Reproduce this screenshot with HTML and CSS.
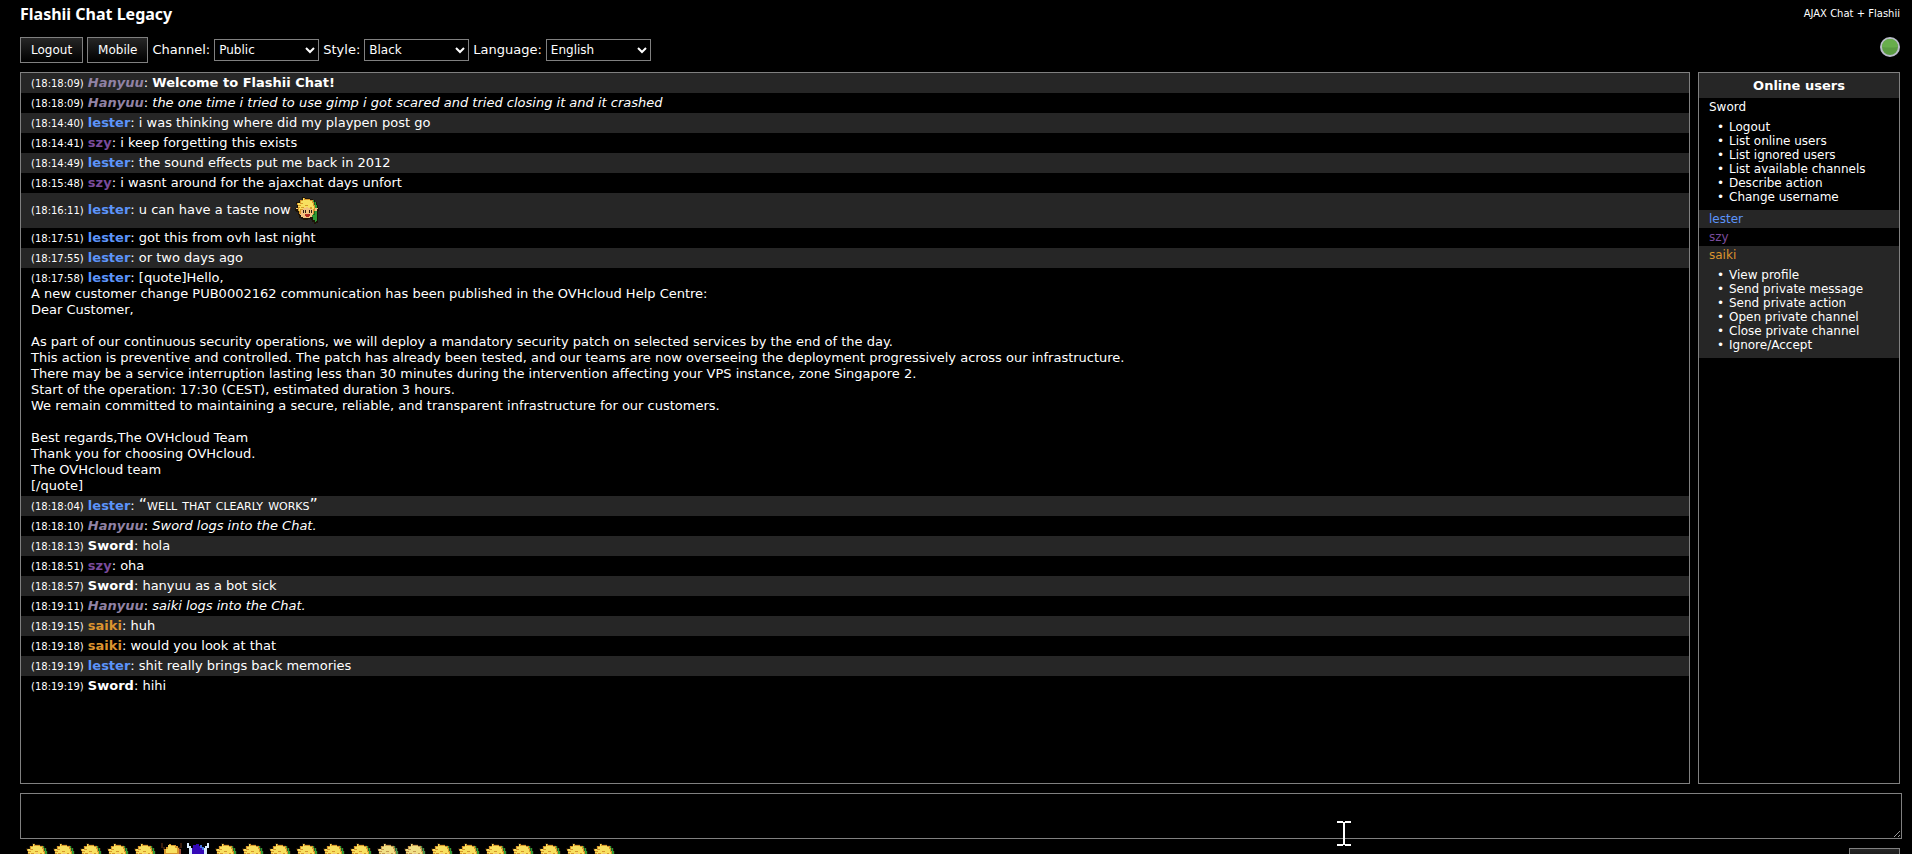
FILE: index.html
```
<!DOCTYPE html>
<html lang="en">
<head>
    <meta charset="UTF-8">
    <title>Flashii Chat Legacy</title>
    <link rel="stylesheet" href="styles.css">
</head>
<body>
    <!-- Emoticon shapes, reused in the chat and the emoticon bar -->
    <svg class="defs" aria-hidden="true">
        <symbol id="emo" viewBox="0 0 24 27">
            <path fill="#1c1408" d="M7 0h3v1h5v1h3v1h2v2h2v3h1v3h1v3h-1v12h-2v1h-2v-2h-2v-2h-1v-1h-3v1H8v-1H6v-1H4v-3H3v-3H1v-1H0v-3h2V7H1V5h3V3h3z"/>
            <path fill="#2f9a35" d="M16 3h3v2h2v3h1v16h-1v1h-1v-2h-2v-3h-2z"/>
            <path fill="#1f6424" d="M17 8h2v3h1v7h-3zM19 5h1v3h-1z"/>
            <path fill="#f2c27e" d="M5 10h13v8h-1v2h-2v1H8v-1H6v-2H5zM1 11h3v2H3v-1H1zM20 11h3v1h-1v2h-2z"/>
            <path fill="#d8982c" d="M8 1h2v1h5v1h3v2h1v3h1v6h-1v3h-1v-5h-3v-2H8v3H6v4H4v-3H3V8H2V6h3V3h3z"/>
            <path fill="#f8e060" d="M8 1h1v2h6v1h2v2h1v3h1v3h-2v-2h-2v1h-2v-1h-2v1H9v-1H8v2H5v2H4v-3h1v-1H3V9h3V8H3V6h3V4h2z"/>
            <path fill="#d8982c" d="M5 6h3v1H5zM10 8h3v1h-3zM6 10h3v1H6z"/>
            <path fill="#2a1a10" d="M8 13h1v3H8zM10 13h1v3h-1zM14 13h1v3h-1zM16 13h1v3h-1z"/>
            <path fill="#b02c20" d="M10 17h5v2h-1v1h-3v-1h-1z"/>
        </symbol>
        <symbol id="emo-horns" viewBox="0 0 24 27">
            <path fill="#3a1d0c" d="M1 0h2v4h2v3H3V5H1zM22 0h-2v4h-2v3h2V5h2z"/>
            <path fill="#d8982c" d="M4 6h2V4h3V1h2v1h5v1h2v2h1v8H4z"/>
            <path fill="#f8e060" d="M8 2h3v1h4v2h2v5H6V6h2z"/>
            <path fill="#a8503c" d="M19 6h2v5h-2z"/>
        </symbol>
        <symbol id="emo-dark" viewBox="0 0 24 27">
            <path fill="#d8ecff" d="M0 0h2v3h2v2h2v8H2V5H0zM22 0h-2v3h-2v2h-2v8h4V5h2z"/>
            <path fill="#3408b8" d="M6 2h3V1h3v2h3v2h2v8H5V5h1z"/>
            <path fill="#4878e0" d="M13 2h2v2h2v3h-2V5h-2z"/>
        </symbol>
    </svg>

    <div class="page">
        <header class="headline">
            <h1>Flashii Chat Legacy</h1>
            <a href="#">AJAX Chat + Flashii</a>
        </header>

        <div class="toolbar">
            <button type="button">Logout</button>
            <button type="button">Mobile</button>
            <label for="channel">Channel:</label>
            <select id="channel"><option>Public</option></select>
            <label for="style">Style:</label>
            <select id="style"><option>Black</option></select>
            <label for="language">Language:</label>
            <select id="language"><option>English</option></select>
            <svg class="status" viewBox="0 0 20 20" role="img" aria-label="Connected">
                <circle cx="10" cy="10" r="9" fill="#5b9c42" stroke="#b9bcc8" stroke-width="2"/>
                <path d="M2 10a8 8 0 0 1 16 0q-8 1-16 0z" fill="#68ad4c"/>
            </svg>
        </div>

        <div class="panels">
            <main class="chat">
                <div class="row"><time>(18:18:09)</time> <b class="bot">Hanyuu</b>: <b>Welcome to Flashii Chat!</b></div>
                <div class="row"><time>(18:18:09)</time> <b class="bot">Hanyuu</b>: <i>the one time i tried to use gimp i got scared and tried closing it and it crashed</i></div>
                <div class="row"><time>(18:14:40)</time> <b class="lester">lester</b>: i was thinking where did my playpen post go</div>
                <div class="row"><time>(18:14:41)</time> <b class="szy">szy</b>: i keep forgetting this exists</div>
                <div class="row"><time>(18:14:49)</time> <b class="lester">lester</b>: the sound effects put me back in 2012</div>
                <div class="row"><time>(18:15:48)</time> <b class="szy">szy</b>: i wasnt around for the ajaxchat days unfort</div>
                <div class="row"><time>(18:16:11)</time> <b class="lester">lester</b>: u can have a taste now <svg class="emote"><use href="#emo"/></svg></div>
                <div class="row"><time>(18:17:51)</time> <b class="lester">lester</b>: got this from ovh last night</div>
                <div class="row"><time>(18:17:55)</time> <b class="lester">lester</b>: or two days ago</div>
                <div class="row"><time>(18:17:58)</time> <b class="lester">lester</b>: [quote]Hello,<br>
                    A new customer change PUB0002162 communication has been published in the OVHcloud Help Centre:<br>
                    Dear Customer,<br>
                    <br>
                    As part of our continuous security operations, we will deploy a mandatory security patch on selected services by the end of the day.<br>
                    This action is preventive and controlled. The patch has already been tested, and our teams are now overseeing the deployment progressively across our infrastructure.<br>
                    There may be a service interruption lasting less than 30 minutes during the intervention affecting your VPS instance, zone Singapore 2.<br>
                    Start of the operation: 17:30 (CEST), estimated duration 3 hours.<br>
                    We remain committed to maintaining a secure, reliable, and transparent infrastructure for our customers.<br>
                    <br>
                    Best regards,The OVHcloud Team<br>
                    Thank you for choosing OVHcloud.<br>
                    The OVHcloud team<br>
                    [/quote]</div>
                <div class="row"><time>(18:18:04)</time> <b class="lester">lester</b>: <span class="small-caps">“well that clearly works”</span></div>
                <div class="row"><time>(18:18:10)</time> <b class="bot">Hanyuu</b>: <i>Sword logs into the Chat.</i></div>
                <div class="row"><time>(18:18:13)</time> <b>Sword</b>: hola</div>
                <div class="row"><time>(18:18:51)</time> <b class="szy">szy</b>: oha</div>
                <div class="row"><time>(18:18:57)</time> <b>Sword</b>: hanyuu as a bot sick</div>
                <div class="row"><time>(18:19:11)</time> <b class="bot">Hanyuu</b>: <i>saiki logs into the Chat.</i></div>
                <div class="row"><time>(18:19:15)</time> <b class="saiki">saiki</b>: huh</div>
                <div class="row"><time>(18:19:18)</time> <b class="saiki">saiki</b>: would you look at that</div>
                <div class="row"><time>(18:19:19)</time> <b class="lester">lester</b>: shit really brings back memories</div>
                <div class="row"><time>(18:19:19)</time> <b>Sword</b>: hihi</div>
            </main>

            <aside class="users">
                <h2>Online users</h2>
                <div class="user">
                    <a href="#">Sword</a>
                    <ul>
                        <li><a href="#">Logout</a></li>
                        <li><a href="#">List online users</a></li>
                        <li><a href="#">List ignored users</a></li>
                        <li><a href="#">List available channels</a></li>
                        <li><a href="#">Describe action</a></li>
                        <li><a href="#">Change username</a></li>
                    </ul>
                </div>
                <div class="user"><a href="#" class="lester">lester</a></div>
                <div class="user"><a href="#" class="szy">szy</a></div>
                <div class="user">
                    <a href="#" class="saiki">saiki</a>
                    <ul>
                        <li><a href="#">View profile</a></li>
                        <li><a href="#">Send private message</a></li>
                        <li><a href="#">Send private action</a></li>
                        <li><a href="#">Open private channel</a></li>
                        <li><a href="#">Close private channel</a></li>
                        <li><a href="#">Ignore/Accept</a></li>
                    </ul>
                </div>
            </aside>
        </div>

        <div class="input">
            <textarea aria-label="Message"></textarea>
            <svg class="caret" viewBox="0 0 14 25" aria-hidden="true">
                <path d="M0 1h6M8 1h6M7 1v23M0 24h6M8 24h6" fill="none" stroke="#fff" stroke-width="2"/>
            </svg>
        </div>

        <div class="bottom">
            <div class="emoticons">
                <svg class="emote"><use href="#emo"/></svg>
                <svg class="emote"><use href="#emo"/></svg>
                <svg class="emote"><use href="#emo"/></svg>
                <svg class="emote"><use href="#emo"/></svg>
                <svg class="emote"><use href="#emo"/></svg>
                <svg class="emote"><use href="#emo-horns"/></svg>
                <svg class="emote"><use href="#emo-dark"/></svg>
                <svg class="emote"><use href="#emo"/></svg>
                <svg class="emote"><use href="#emo"/></svg>
                <svg class="emote"><use href="#emo"/></svg>
                <svg class="emote"><use href="#emo"/></svg>
                <svg class="emote"><use href="#emo"/></svg>
                <svg class="emote"><use href="#emo"/></svg>
                <svg class="emote pale"><use href="#emo"/></svg>
                <svg class="emote pale"><use href="#emo"/></svg>
                <svg class="emote"><use href="#emo"/></svg>
                <svg class="emote"><use href="#emo"/></svg>
                <svg class="emote"><use href="#emo"/></svg>
                <svg class="emote"><use href="#emo"/></svg>
                <svg class="emote"><use href="#emo"/></svg>
                <svg class="emote"><use href="#emo"/></svg>
                <svg class="emote"><use href="#emo"/></svg>
            </div>
            <button type="button" class="submit" aria-label="Submit"></button>
        </div>
    </div>
</body>
</html>
```

FILE: styles.css
```
* { box-sizing: border-box; }
html, body { height: 100%; overflow: hidden; }
body { margin: 0; background: #000; color: #fff; font: 13px/16px Verdana, "DejaVu Sans", sans-serif; }
a { color: #fff; text-decoration: none; }
.defs { display: none; }

/* the emoticon bar runs on below the window edge */
.page { display: flex; flex-direction: column; height: calc(100vh + 20px); padding: 0 12px 0 20px; }

.headline { display: flex; justify-content: space-between; height: 37px; padding-top: 4px; }
.headline h1 { margin: 0; font: bold 16px/20px "Trebuchet MS", "Noto Sans", sans-serif; }
.headline a { font-size: 10px; line-height: 20px; }

.toolbar { display: flex; align-items: center; gap: 4px; height: 26px; margin-bottom: 9px; }
.toolbar select { width: 105px; height: 22px; padding: 0; border: 1px solid #808080; background: #000; color: #fff; font: 12px Tahoma, "DejaVu Sans", sans-serif; }
.status { width: 20px; height: 20px; margin-left: auto; align-self: flex-start; }

button { height: 26px; padding: 0 10px; border: 1px solid #808080; background: linear-gradient(#262626, #000); color: #fff; font: 12px Tahoma, "DejaVu Sans", sans-serif; }

.panels { display: flex; gap: 8px; flex: 1; min-height: 0; }
.chat, .users { border: 1px solid #808080; overflow: hidden; }
.chat { flex: 1; }
.row { padding: 2px 10px; }
.row:nth-child(odd) { background: #262626; }
.row time { font-size: 10px; line-height: 10px; }
.small-caps { font-size: 16px; line-height: 12px; font-variant: small-caps; }

.emote { width: 24px; height: 27px; vertical-align: middle; shape-rendering: crispEdges; }
.row .emote { margin: 2px 0; }
.pale { filter: saturate(0.7); }

.bot { color: #9182a4; font-style: italic; }
.lester { color: #5c94fa; }
.szy { color: #7a4c9c; }
.saiki { color: #db942f; }

.users { width: 202px; font-size: 12px; line-height: 14px; }
.users h2 { margin: 0; background: #262626; font-size: 13px; line-height: 25px; text-align: center; }
.user { padding: 2px 10px; }
.user:nth-of-type(2), .user:nth-of-type(4) { background: #262626; }
.user ul { margin: 6px 0 4px; padding-left: 8px; list-style: none; }
.user li::before { content: "•"; display: inline-block; width: 12px; }

.input { position: relative; margin: 9px -2px 0 0; }
.input textarea { display: block; width: 100%; height: 46px; padding: 4px; border: 1px solid #808080; background: #000; color: #fff; resize: vertical; }
.caret { position: absolute; left: 70%; top: 28px; width: 14px; height: 25px; }

.bottom { display: flex; justify-content: space-between; height: 35px; }
.emoticons { display: flex; gap: 3px; padding: 4px 0 0 5px; }
.submit { width: 51px; margin-top: 9px; }
```
